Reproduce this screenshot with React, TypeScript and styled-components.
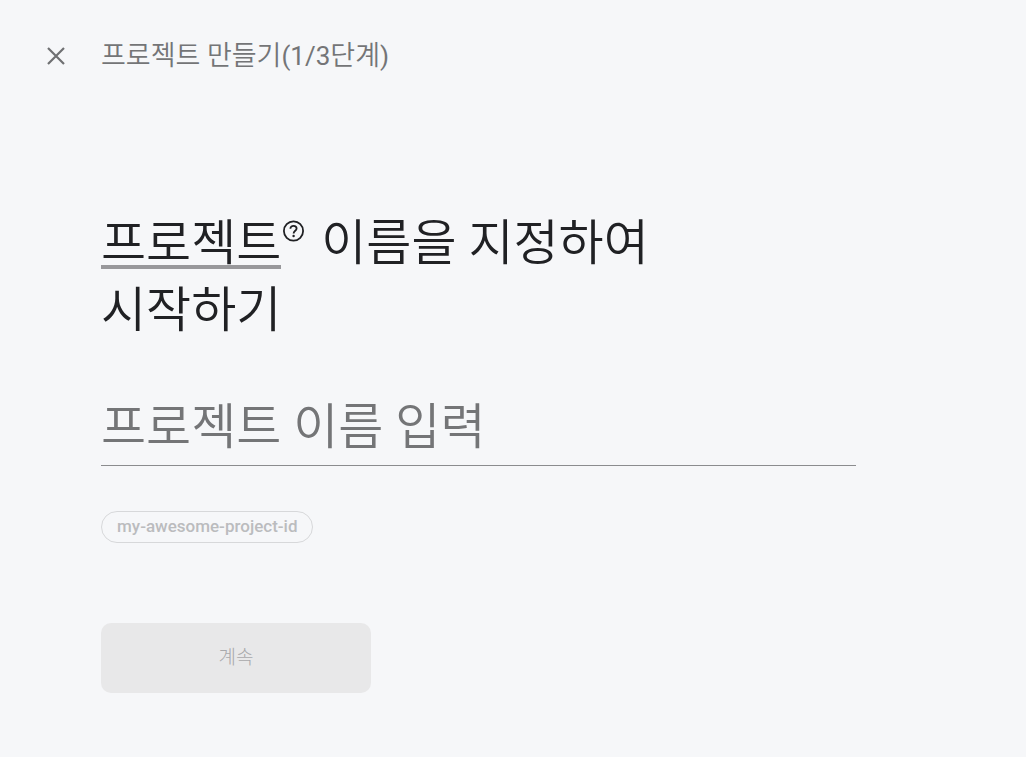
import React, { useState } from "react";
import styled, { createGlobalStyle } from "styled-components";

const GlobalStyle = createGlobalStyle`
  *, *::before, *::after { box-sizing: border-box; }
  body {
    margin: 0;
    background: #f6f7f9;
    font-family: Roboto, "Noto Sans CJK KR", sans-serif;
    font-weight: 350;
  }
`;

const Header = styled.header`
  display: flex;
  align-items: center;
  gap: 33px;
  padding: 36px 44px 0;
`;

const CloseButton = styled.button`
  display: flex;
  width: 24px;
  height: 24px;
  padding: 0;
  border: 0;
  background: none;
  color: #6f7072;
  cursor: pointer;
`;

const StepTitle = styled.h2`
  margin: 0;
  font-size: 27px;
  font-weight: 350;
  line-height: 40px;
  color: #747577;
`;

const StepCount = styled.span`
  font-size: 26px;
  font-weight: 400;
`;

const Form = styled.form`
  max-width: 856px;
  padding: 134px 0 64px 101px;
`;

const Heading = styled.h1`
  margin: 0;
  font-size: 49px;
  font-weight: 350;
  line-height: 67px;
  color: #202124;
  word-break: keep-all;
`;

const Term = styled.span`
  display: inline-block;
  line-height: 42px;
  border-bottom: 4px solid #98989b;
`;

const HelpButton = styled.button`
  width: 24px;
  height: 24px;
  margin-right: 4px;
  padding: 0;
  border: 0;
  background: none;
  color: #202124;
  vertical-align: 17px;
  line-height: 0;
  cursor: pointer;
`;

const NameInput = styled.input`
  display: block;
  width: 100%;
  height: 80px;
  margin-top: 42px;
  padding: 4px 0 0;
  border: 0;
  border-bottom: 1px solid #8b8c8e;
  outline: 0;
  background: none;
  font: inherit;
  font-size: 49px;
  color: #202124;
  &::placeholder { color: #747577; opacity: 1; }
`;

const IdChip = styled.button`
  display: block;
  height: 32px;
  margin-top: 45px;
  padding: 0 15px 2px;
  border: 1px solid #d7d8da;
  border-radius: 16px;
  background: none;
  font: 500 17px Roboto, sans-serif;
  color: #bbbcbe;
`;

const ContinueButton = styled.button`
  display: block;
  width: 270px;
  height: 70px;
  margin-top: 80px;
  padding: 0 0 6px;
  border: 0;
  border-radius: 10px;
  background: #e8e8e9;
  font: inherit;
  font-size: 19px;
  font-weight: 300;
  color: #a8a9ab;
`;

export default function App() {
  const [name, setName] = useState("");
  return (
    <>
      <GlobalStyle />
      <Header>
        <CloseButton type="button" aria-label="닫기">
          <svg width="24" height="24" viewBox="0 0 24 24" fill="none" stroke="currentColor" strokeWidth="2.2">
            <path d="M4 4 20 20M20 4 4 20" />
          </svg>
        </CloseButton>
        <StepTitle>
          프로젝트 만들기<StepCount>(1/3</StepCount>단계<StepCount>)</StepCount>
        </StepTitle>
      </Header>
      <main>
        <Form onSubmit={(e) => e.preventDefault()}>
          <Heading>
            <Term>프로젝트</Term>
            <HelpButton type="button" aria-label="도움말">
              <svg width="24" height="24" viewBox="0 0 24 24" fill="none" stroke="currentColor" strokeWidth="1.8">
                <circle cx="12.500" cy="12" r="9.600" />
                <path d="M9.400 9.800C9.400 7.900 10.700 6.800 12.500 6.800S15.600 7.900 15.600 9.500C15.600 11.700 12.600 11.800 12.600 14.400" />
                <circle cx="12.600" cy="17" r="1.200" fill="currentColor" stroke="none" />
              </svg>
            </HelpButton>{" "}
            이름을 지정하여
            <br />
            시작하기
          </Heading>
          <NameInput
            aria-label="프로젝트 이름"
            placeholder="프로젝트 이름 입력"
            value={name}
            onChange={(e) => setName(e.target.value)}
          />
          <IdChip type="button" disabled>my-awesome-project-id</IdChip>
          <ContinueButton type="submit" disabled={!name}>계속</ContinueButton>
        </Form>
      </main>
    </>
  );
}
